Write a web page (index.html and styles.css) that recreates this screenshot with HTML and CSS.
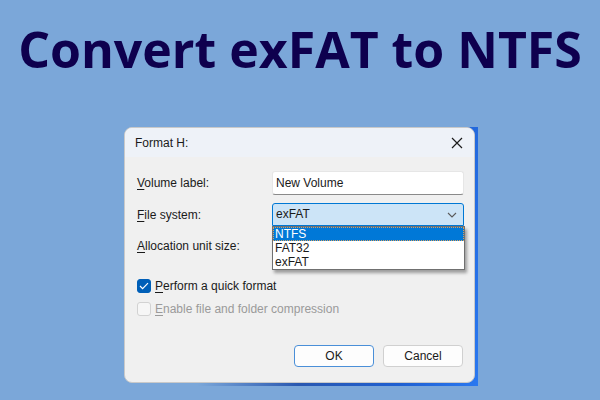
FILE: index.html
```html
<!DOCTYPE html>
<html>
<head>
<meta charset="utf-8">
<link rel="stylesheet" href="styles.css">
</head>
<body>
<h1 class="headline">Convert exFAT to NTFS</h1>
<div class="shot">
  <div class="dialog">
    <div class="titlebar">
      <span class="title">Format H:</span>
      <svg class="close" width="12" height="12" viewBox="0 0 12 12"><path d="M1 1 L11 11 M11 1 L1 11" stroke="#1c1c1c" stroke-width="1.2" fill="none"/></svg>
    </div>
    <div class="body">
      <div class="form">
        <label class="lbl"><u>V</u>olume label:</label>
        <div class="input">New Volume</div>
        <label class="lbl"><u>F</u>ile system:</label>
        <div class="combo-wrap">
          <div class="combo">exFAT
            <svg class="chev" width="10" height="6" viewBox="0 0 10 6"><path d="M1 1 L5 5 L9 1" stroke="#5c5c5c" stroke-width="1.1" fill="none"/></svg>
          </div>
          <ul class="list">
            <li class="sel">NTFS</li>
            <li>FAT32</li>
            <li>exFAT</li>
          </ul>
        </div>
        <label class="lbl"><u>A</u>llocation unit size:</label>
        <div class="combo plain"></div>
      </div>
      <div class="checks">
        <div class="check"><span class="box on"><svg width="10" height="8" viewBox="0 0 10 8"><path d="M1 4 L3.6 6.6 L9 1.2" stroke="#fff" stroke-width="1.2" fill="none"/></svg></span><span><u>P</u>erform a quick format</span></div>
        <div class="check off"><span class="box"></span><span><u>E</u>nable file and folder compression</span></div>
      </div>
      <div class="buttons">
        <button class="btn default">OK</button>
        <button class="btn">Cancel</button>
      </div>
    </div>
  </div>
</div>
</body>
</html>
```

FILE: styles.css
```css
html, body {
  margin: 0;
  padding: 0;
}
body {
  width: 600px;
  height: 400px;
  background: #7ba7d9;
  overflow: hidden;
  font-family: "Liberation Sans", Arial, sans-serif;
}
.headline {
  margin: 0;
  box-sizing: border-box;
  padding-top: 19px;
  height: 127px;
  text-align: center;
  font-family: "Open Sans", sans-serif;
  font-weight: 700;
  font-size: 50px;
  line-height: 60px;
  color: #0e004e;
  letter-spacing: 0px;
  white-space: nowrap;
}
.shot {
  margin-left: 123px;
  width: 355px;
  height: 259px;
  box-sizing: border-box;
  padding: 0 3px 3px 1px;
  background: linear-gradient(100deg, #7ba7d9 0%, #7ba7d9 30%, #2a58b0 55%, #1f5fd0 80%, #2a78f0 100%);
}
.dialog {
  width: 351px;
  height: 256px;
  box-sizing: border-box;
  background: #f0f0f0;
  border: 1px solid #c9c9c9;
  border-radius: 8px;
  overflow: hidden;
  display: flex;
  flex-direction: column;
}
.titlebar {
  height: 29px;
  flex: none;
  background: #eef2f8;
  display: flex;
  align-items: center;
  justify-content: space-between;
  padding: 0 11px 0 10px;
}
.title {
  font-size: 12px;
  color: #1a1a1a;
}
.close {
  display: block;
}
.body {
  flex: 1;
  padding: 14px 11px 0 12px;
  display: flex;
  flex-direction: column;
}
.form {
  display: grid;
  grid-template-columns: 135px 192px;
  grid-auto-rows: auto;
  row-gap: 8px;
  align-items: center;
}
.lbl {
  font-size: 12px;
  color: #1a1a1a;
}
u {
  text-decoration-thickness: 1px;
  text-underline-offset: 2px;
}
.input {
  height: 24px;
  box-sizing: border-box;
  background: #fff;
  border: 1px solid #e6e6e6;
  border-bottom-color: #8a8a8a;
  border-radius: 3px;
  font-size: 12px;
  color: #1a1a1a;
  padding: 0 3px;
  line-height: 22px;
}
.combo-wrap {
  position: relative;
}
.combo {
  height: 23px;
  box-sizing: border-box;
  background: #cce4f7;
  border: 1px solid #0078d4;
  border-radius: 3px 3px 0 0;
  font-size: 12px;
  color: #1a1a1a;
  padding: 0 3px;
  line-height: 21px;
  display: flex;
  justify-content: space-between;
  align-items: center;
}
.combo .chev {
  margin-right: 3px;
}
.combo.plain {
  background: #fdfdfd;
  border-color: #d0d0d0;
  border-radius: 3px;
}
.list {
  position: absolute;
  top: 100%;
  left: 0;
  right: -1px;
  margin: 0;
  padding: 0;
  list-style: none;
  background: #fff;
  border: 1px solid #707070;
  box-shadow: 2px 3px 3px rgba(0, 0, 0, 0.35);
  z-index: 2;
  font-size: 12px;
  color: #1a1a1a;
}
.list li {
  height: 14px;
  line-height: 14px;
  padding: 0 2px;
}
.list li.sel {
  background: #0078d7;
  color: #fff;
  outline: 1px dotted #d8a060;
  outline-offset: -1px;
}
.checks {
  margin-top: 22px;
  display: flex;
  flex-direction: column;
  gap: 9px;
}
.check {
  display: flex;
  align-items: center;
  gap: 4px;
  font-size: 12px;
  color: #1a1a1a;
  height: 14px;
}
.check.off {
  color: #9a9a9a;
}
.box {
  width: 14px;
  height: 14px;
  box-sizing: border-box;
  border-radius: 3px;
  border: 1px solid #d2d2d2;
  background: #f6f6f6;
  display: flex;
  align-items: center;
  justify-content: center;
}
.box.on {
  background: #005fb8;
  border-color: #005fb8;
}
.buttons {
  margin-top: 29px;
  display: flex;
  justify-content: flex-end;
  gap: 9px;
}
.btn {
  width: 80px;
  height: 22px;
  box-sizing: border-box;
  background: #fdfdfd;
  border: 1px solid #d0d0d0;
  border-radius: 4px;
  font-family: "Liberation Sans", Arial, sans-serif;
  font-size: 12px;
  color: #1a1a1a;
  padding: 0;
}
.btn.default {
  border-color: #4a8fd8;
}
```
